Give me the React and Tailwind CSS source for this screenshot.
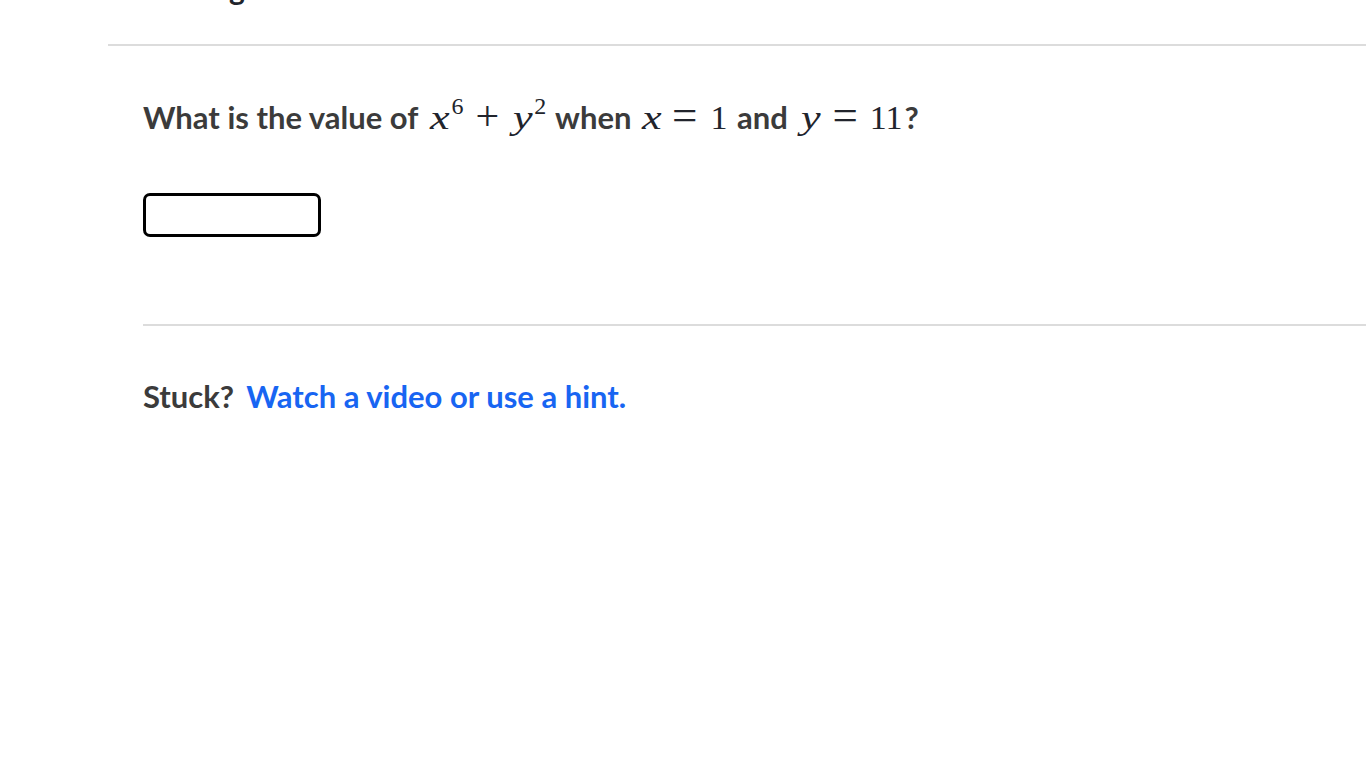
const serif = { fontFamily: '"Liberation Serif", "DejaVu Serif", serif' };

// variables are drawn a bit wider so they sit like the math font in the picture
const V = ({ children, className = '' }) => (
    <span className={`italic inline-block origin-left scale-x-[1.3] ${className}`} style={serif}>{children}</span>
);
const N = ({ children, className = '' }) => (
    <span className={className} style={serif}>{children}</span>
);
const Sup = ({ children, className = '' }) => (
    <span className={`text-[24px] leading-[20px] relative -top-[15px] ${className}`} style={serif}>{children}</span>
);
const Op = ({ children, className = '' }) => (
    <span className={`leading-[20px] relative top-[1px] ${className}`} style={serif}>{children}</span>
);

const App = () => {
    return (
        <div className="min-h-screen bg-white overflow-hidden font-['Lato',_'Open_Sans',_sans-serif]">
            <div className="pl-[108px]">
                <div className="h-[44px] flex items-end overflow-hidden">
                    <div className="text-[30px] font-bold text-[#21242c] leading-none pl-[121px] mb-[41px]">g</div>
                </div>
                <div className="h-[2px] bg-[#dcdcdc]"></div>
            </div>

            <div className="pl-[143px]">
                <div className="pt-[51px] h-[91px] text-[31px] font-bold text-[#3b3b3b] leading-[40px] flex items-baseline whitespace-pre">
                    <span>What is the value of </span>
                    <span className="text-[34px] font-normal text-[#21242c] flex items-baseline">
                        <V className="ml-[5px]">x</V>
                        <Sup className="ml-[6px]">6</Sup>
                        <Op className="text-[42px] ml-[12px]">+</Op>
                        <V className="ml-[14px]">y</V>
                        <Sup className="ml-[6px] mr-[2px]">2</Sup>
                    </span>
                    <span> when </span>
                    <span className="text-[34px] font-normal text-[#21242c] flex items-baseline">
                        <V className="ml-[3px]">x</V>
                        <Op className="text-[45px] ml-[15px]">=</Op>
                        <N className="ml-[13px] mr-[2px]">1</N>
                    </span>
                    <span> and </span>
                    <span className="text-[34px] font-normal text-[#21242c] flex items-baseline">
                        <V className="ml-[6px]">y</V>
                        <Op className="text-[45px] ml-[16px]">=</Op>
                        <N className="ml-[12px] mr-[2px]">11</N>
                    </span>
                    <span>?</span>
                </div>

                <div className="mt-[56px]">
                    <input
                        type="text"
                        className="block w-[178px] h-[44px] border-[3px] border-black rounded-[7px] outline-none px-2 text-[20px]"
                    />
                </div>

                <div className="mt-[87px] h-[2px] bg-[#dcdcdc]"></div>

                <div className="mt-[50px] text-[31px] font-bold leading-[40px] flex items-baseline">
                    <span className="text-[#3b3b3b]">Stuck?</span>
                    <a href="#" className="ml-[12px] text-[#1865f2]">Watch a video or use a hint.</a>
                </div>
            </div>
        </div>
    );
};

export default App;
